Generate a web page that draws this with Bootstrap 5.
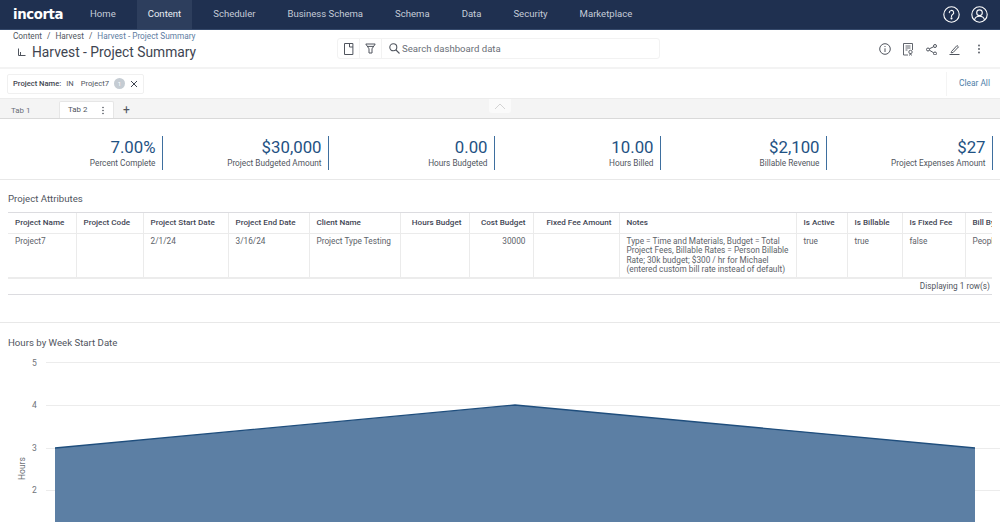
<!DOCTYPE html>
<html lang="en"><head><meta charset="utf-8"><title>Harvest - Project Summary</title>
<link rel="stylesheet" href="https://cdn.jsdelivr.net/npm/bootstrap@5.3.0/dist/css/bootstrap.min.css">
<style>
html,body{height:522px;overflow:hidden}
body{font-family:Roboto,"Liberation Sans",sans-serif;font-size:8.25px;color:#50555e;background:#fff}
.topbar{height:30px;background:#1f3050;border-bottom:1px solid #35496b;padding-left:13px;padding-right:12px}
.logo-txt{font-family:"DejaVu Sans",sans-serif;font-weight:700;font-size:13.3px;color:#fff;width:63px;letter-spacing:-.4px;line-height:1}
.topnav{gap:10px;height:29px}
.topnav a{display:flex;align-items:center;padding:0 11px;font-size:9.55px;color:#c5ccd8;text-decoration:none;height:29px}
.topnav a.on{background:#2d3e5d;color:#e9edf3}
.subhead{height:39px;border-bottom:2px solid #f3f3f3}
.crumbs{font-size:8.25px;padding:1px 0 0 13px;line-height:11px;color:#50555e}
.crumbs .sep{margin:0 5px}
.crumbs .cur{color:#5d7d9f}
.ptitle{font-size:13.8px;color:#3e4450;line-height:17px;padding:2px 0 0 17px;gap:6px}
.searchbox{width:323px;height:21px;border:1px solid #f2f2f2;border-radius:3px}
.searchbox .cell{width:22px;height:100%;border-right:1px solid #f2f2f2}
.searchbox .ph{font-size:9.6px;color:#6a6f78;margin-left:2px;padding-top:1px}
.srch{margin-left:7px}
.filterbar{height:30px;border-bottom:1px solid #ececec;padding-left:7px}
.chip{height:20px;border:1px solid #f0f0f0;border-radius:2px;padding:0 5px;font-size:7.6px;gap:5px;background:#fff}
.chip b{font-weight:500;color:#3e4450}
.num{width:11px;height:11px;border-radius:50%;background:#c5ccd3;color:#fff;font-size:6px;line-height:11px;text-align:center}
.clear{width:53px;height:24px;border-left:1px solid #f4f4f4;color:#4f7ea8;font-size:8.4px;padding-left:12px;margin-right:1px}
.tabbar{height:20px;background:#f4f4f4;border-bottom:1px solid #d9d9d9;padding-left:2px;position:relative}
.tabx{height:19px;font-size:7.9px;padding:4px 9px 0;color:#6a6f78;width:57px}
.tabx.act{width:55px;background:#fff;border:1px solid #e6e6e6;border-bottom:0;border-radius:2px 2px 0 0;height:17px;padding:0 8px;color:#50555e;justify-content:space-between}
.plus{font-size:12px;color:#50555e;margin-left:9px;line-height:1;padding-top:3px}
.collapse-tab{position:absolute;left:489px;top:0;width:22px;height:14px;background:#fafafa;border-radius:0 0 3px 3px}
.kpis{height:61px;border-bottom:1px solid #e8e8e8;padding-top:17px}
.kpibar{border-right:1.5px solid #3e6f9f;width:162.5px;height:34px;padding-right:6px;margin-right:3.5px;text-align:right}
.kval{font-size:16.8px;line-height:21px;color:#1f5283;padding-top:1px}
.klab{font-size:8.25px;line-height:11px;color:#50555e}
.sect{height:143px;border-bottom:1px solid #e8e8e8;padding:12px 8px 0 8px}
.stitle{font-size:9.65px;line-height:13px;color:#50555e}
.tblwrap{margin-top:7px;width:984px;overflow:hidden;border-top:1px solid #dcdce0}
table.grid{table-layout:fixed;width:1030px;border-collapse:collapse;font-size:8.25px;line-height:9.6px;color:#5d6269}
table.grid th{height:20px;padding:1px 7px 0;font-weight:500;font-size:8.1px;color:#3f4654;border-bottom:1px solid #ebebeb;border-right:1px solid #ebebeb;white-space:nowrap}
table.grid td{height:45px;padding:3px 7px 0;vertical-align:top;border-right:1px solid #ebebeb;border-bottom:2px solid #ececec}
.tfoot{height:16px;width:984px;border-bottom:1px solid #dcdce0;text-align:right;line-height:15px;padding-right:2px;color:#50555e}
.chartsect{padding:13px 8px 0}
.chartsvg{display:block;margin:1px -8px 0;width:1000px;height:180px}
.chartsvg text{font-family:Roboto,"Liberation Sans",sans-serif;font-size:8.5px;fill:#6f7379}
</style></head><body>
<nav class="topbar d-flex align-items-center">
 <div class="logo-txt">incorta</div>
 <div class="topnav d-flex align-items-center" style="margin-left:3px">
  <a href="#">Home</a><a href="#" class="on">Content</a><a href="#">Scheduler</a><a href="#">Business Schema</a><a href="#">Schema</a><a href="#">Data</a><a href="#">Security</a><a href="#">Marketplace</a>
 </div>
 <div class="ms-auto d-flex align-items-center" style="gap:11px">
  <svg width="17" height="17" viewBox="0 0 17 17" fill="none" stroke="#fff" stroke-width="1.1"><circle cx="8.5" cy="8.5" r="7.7"/><path d="M6.3 6.6a2.2 2.2 0 1 1 3.3 1.9c-.7.4-1.1.9-1.1 1.7v.3" stroke-linecap="round"/><circle cx="8.5" cy="12.4" r=".5" fill="#fff"/></svg>
  <svg width="17" height="17" viewBox="0 0 17 17" fill="none" stroke="#fff" stroke-width="1.1"><circle cx="8.5" cy="8.5" r="7.7"/><circle cx="8.5" cy="6.7" r="2.8"/><path d="M3.5 14c.6-2.6 2.5-3.7 5-3.7s4.400 1.100 5 3.700"/></svg>
 </div>
</nav>

<header class="subhead d-flex">
 <div class="flex-grow-0" style="width:337px">
  <div class="crumbs"><span>Content</span><span class="sep">/</span><span>Harvest</span><span class="sep">/</span><span class="cur">Harvest - Project Summary</span></div>
  <div class="ptitle d-flex align-items-center">
   <svg width="9" height="9" viewBox="0 0 9 9" fill="none" stroke="#50555e" stroke-width="1"><path d="M1.500 0.500V7.500H8.500"/><path d="M3.500 4V7.500"/></svg>
   <span>Harvest - Project Summary</span>
  </div>
 </div>
 <div style="padding-top:8px">
  <div class="searchbox d-flex align-items-center">
   <div class="cell d-flex align-items-center justify-content-center"><svg width="10" height="12" viewBox="0 0 10 12" fill="none" stroke="#50555e"><path d="M.5.5h8.400v11H.5zM5.500.5v3.500h3.400"/></svg></div>
   <div class="cell d-flex align-items-center justify-content-center"><svg width="11" height="11" viewBox="0 0 11 11" fill="none" stroke="#50555e"><path d="M.8 1h9.400L7 5.800V10H4V5.800zM2.300 3.400h6.400"/></svg></div>
   <svg class="srch" width="11" height="11" viewBox="0 0 11 11" fill="none" stroke="#50555e" stroke-width="1.100"><circle cx="4.300" cy="4.300" r="3.500"/><path d="M7 7l3.500 3.500"/></svg>
   <span class="ph">Search dashboard data</span>
  </div>
 </div>
 <div class="ms-auto d-flex align-items-center" style="padding:1px 18px 0 0;gap:12px">
  <svg width="12" height="12" viewBox="0 0 12 12" fill="none" stroke="#50555e"><circle cx="6" cy="6" r="5.300"/><path d="M6 5.300v3.700M6 3v1"/></svg>
  <svg width="11" height="13" viewBox="0 0 11 13" fill="none" stroke="#50555e" stroke-width=".9"><path d="M5 12H.5V.5h9V7M2.500 3h5M2.500 5h5M2.500 7h2"/><circle cx="7.500" cy="9" r="1.700"/><path d="M6.500 12.500l1-2 1 2"/></svg>
  <svg width="11" height="11" viewBox="0 0 11 11" fill="none" stroke="#50555e"><circle cx="2" cy="5.500" r="1.500"/><circle cx="9" cy="2" r="1.500"/><circle cx="9" cy="9.500" r="1.500"/><path d="M3.400 4.800L7.700 2.700M3.400 6.200l4.300 2.600"/></svg>
  <svg width="11" height="11" viewBox="0 0 11 11" fill="none" stroke="#50555e"><path d="M2.500 7.500L8 1.500l1.500 1.400-5.400 5.600-2 .3zM.500 10.500h10"/></svg>
  <svg class="ms-1" width="6" height="10" viewBox="0 0 6 10" fill="#50555e"><circle cx="3" cy="1.500" r=".9"/><circle cx="3" cy="5" r=".9"/><circle cx="3" cy="8.500" r=".9"/></svg>
 </div>
</header>

<div class="filterbar d-flex align-items-center">
 <div class="chip d-flex align-items-center"><b>Project Name:</b><span>IN</span><span style="margin-left:2px">Project7</span><span class="num">1</span><svg width="8" height="8" viewBox="0 0 8 8" stroke="#3e4450" stroke-width="1"><path d="M1 1l6 6M7 1L1 7"/></svg></div>
 <a class="clear ms-auto d-flex align-items-center text-decoration-none" href="#">Clear All</a>
</div>

<div class="tabbar d-flex align-items-end">
 <div class="tabx d-flex align-items-center">Tab 1</div>
 <div class="tabx act d-flex align-items-center"><span>Tab 2</span><svg width="4" height="9" viewBox="0 0 4 9" fill="#50555e"><circle cx="2" cy="1.500" r=".8"/><circle cx="2" cy="4.500" r=".8"/><circle cx="2" cy="7.500" r=".8"/></svg></div>
 <div class="plus align-self-center">+</div>
 <div class="collapse-tab d-flex align-items-center justify-content-center"><svg width="12" height="7" viewBox="0 0 12 7" fill="none" stroke="#d3d3d3"><path d="M1 6l5-5 5 5"/></svg></div>
</div>

<section class="kpis d-flex">
 <div class="kpibar"><div class="kval">7.00%</div><div class="klab">Percent Complete</div></div>
 <div class="kpibar"><div class="kval">$30,000</div><div class="klab">Project Budgeted Amount</div></div>
 <div class="kpibar"><div class="kval">0.00</div><div class="klab">Hours Budgeted</div></div>
 <div class="kpibar"><div class="kval">10.00</div><div class="klab">Hours Billed</div></div>
 <div class="kpibar"><div class="kval">$2,100</div><div class="klab">Billable Revenue</div></div>
 <div class="kpibar"><div class="kval">$27</div><div class="klab">Project Expenses Amount</div></div>
</section>

<section class="sect">
 <div class="stitle">Project Attributes</div>
 <div class="tblwrap">
  <table class="grid"><colgroup><col style="width:68px"><col style="width:67px"><col style="width:85px"><col style="width:81px"><col style="width:91px"><col style="width:69px"><col style="width:64px"><col style="width:86px"><col style="width:177px"><col style="width:51px"><col style="width:55px"><col style="width:63px"><col style="width:73px"></colgroup>
  <thead><tr><th>Project Name</th><th>Project Code</th><th>Project Start Date</th><th>Project End Date</th><th>Client Name</th><th class="text-end">Hours Budget</th><th class="text-end">Cost Budget</th><th class="text-end">Fixed Fee Amount</th><th>Notes</th><th>Is Active</th><th>Is Billable</th><th>Is Fixed Fee</th><th>Bill By</th></tr></thead>
  <tbody><tr><td>Project7</td><td></td><td>2/1/24</td><td>3/16/24</td><td>Project Type Testing</td><td></td><td class="text-end">30000</td><td></td><td>Type = Time and Materials, Budget = Total Project Fees, Billable Rates = Person Billable Rate; 30k budget; $300 / hr for Michael (entered custom bill rate instead of default)</td><td>true</td><td>true</td><td>false</td><td>People</td></tr></tbody></table>
 </div>
 <div class="tfoot">Displaying 1 row(s)</div>
</section>

<section class="chartsect">
 <div class="stitle">Hours by Week Start Date</div>
 <svg class="chartsvg" viewBox="0 0 1000 180" aria-label="Area chart of hours by week start date">
  <g stroke="#ececec" stroke-width="1"><path d="M46 12.500H1000M46 55.500H1000M46 98.500H1000M46 140.500H1000"/></g>
  <text x="32" y="16">5</text><text x="32" y="58">4</text><text x="32" y="101">3</text><text x="32" y="143">2</text>
  <text transform="translate(25 130) rotate(-90)">Hours</text>
  <path d="M55 98L515 55L975 98V180H55Z" fill="#5c7fa4"/>
  <path d="M55 98L515 55L975 98" fill="none" stroke="#1f4e7d" stroke-width="1.300"/>
 </svg>
</section>
<script src="https://cdn.jsdelivr.net/npm/bootstrap@5.3.0/dist/js/bootstrap.bundle.min.js"></script>
</body></html>
